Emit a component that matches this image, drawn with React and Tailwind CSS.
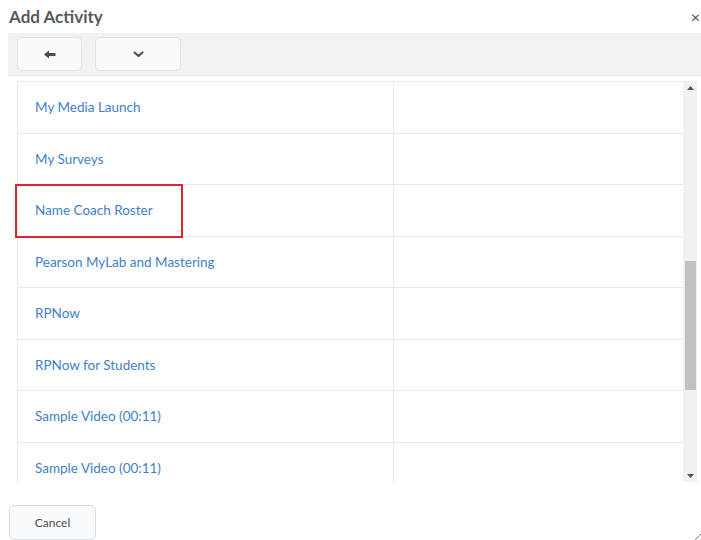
import React from 'react';

const tools = [
    'My Media Launch',
    'My Surveys',
    'Name Coach Roster',
    'Pearson MyLab and Mastering',
    'RPNow',
    'RPNow for Students',
    'Sample Video (00:11)',
    'Sample Video (00:11)',
];

function BackIcon() {
    return (
        <svg width="12" height="9" viewBox="0 0 12 9">
            <path d="M0 4.5 L5 0.5 V3 H11.5 V6 H5 V8.5 Z" fill="#494c4e" />
        </svg>
    );
}

function ChevronIcon() {
    return (
        <svg width="11" height="7" viewBox="0 0 11 7">
            <path d="M1.5 1.5 L5.5 5 L9.5 1.5" fill="none" stroke="#494c4e" strokeWidth="2" strokeLinecap="round" strokeLinejoin="round" />
        </svg>
    );
}

function App() {
    return (
        <div className="w-[701px] h-[540px] bg-white overflow-hidden relative font-['Lato','Open_Sans',sans-serif]">
            {/* title */}
            <div className="h-[33px] flex items-center justify-between pl-[9px]">
                <h1 className="text-[17px] font-bold text-[#565a5c] leading-none">Add Activity</h1>
                <span className="text-[16px] text-[#494c4e] mr-[1px] leading-none">×</span>
            </div>

            {/* toolbar */}
            <div className="ml-[8px] h-[43px] bg-[#f2f2f2] border-b border-[#e4e4e4] flex items-center gap-[13px] pl-[9px]">
                <button className="w-[65px] h-[34px] bg-[#f9fafb] border border-[#e0e3e8] rounded-[5px] flex items-center justify-center">
                    <BackIcon />
                </button>
                <button className="w-[86px] h-[34px] bg-[#f9fafb] border border-[#e0e3e8] rounded-[5px] flex items-center justify-center">
                    <ChevronIcon />
                </button>
            </div>

            {/* tool list */}
            <div className="relative mt-[5px] ml-[17px] h-[401px] flex">
                <div className="w-[666px] h-full overflow-hidden border-l border-t border-[#e6e9ee]">
                    {tools.map((name, i) => (
                        <div key={i} className="h-[51.5px] flex border-b border-[#e6e9ee]">
                            <div className="w-[376px] border-r border-[#e6e9ee] flex items-center pl-[17px]">
                                <a className="text-[13.5px] text-[#3f7fc6]">{name}</a>
                            </div>
                            <div className="flex-1" />
                        </div>
                    ))}
                </div>
                {/* highlight around Name Coach Roster */}
                <div className="absolute left-[-2px] top-[103px] w-[168px] h-[54px] border-2 border-[#e3222b]" />
                {/* scrollbar */}
                <div className="w-[14px] h-full bg-[#f1f1f1] flex flex-col items-center">
                    <div className="h-[13px] flex items-center justify-center">
                        <svg width="7" height="4" viewBox="0 0 7 4"><path d="M0 4 L3.5 0 L7 4 Z" fill="#555" /></svg>
                    </div>
                    <div className="mt-[167px] w-[11px] h-[129px] bg-[#c1c1c1]" />
                    <div className="flex-1" />
                    <div className="h-[13px] flex items-center justify-center">
                        <svg width="7" height="4" viewBox="0 0 7 4"><path d="M0 0 L3.5 4 L7 0 Z" fill="#555" /></svg>
                    </div>
                </div>
            </div>

            {/* footer */}
            <div className="mt-[23px] pl-[9px]">
                <button className="w-[87px] h-[35px] bg-[#f9fafb] border border-[#d8dce3] rounded-[5px] text-[12px] text-[#494c4e]">
                    Cancel
                </button>
            </div>

            {/* resize grip */}
            <svg className="absolute right-[0px] bottom-[0px]" width="6" height="6" viewBox="0 0 6 6">
                <path d="M6 0 L0 6" stroke="#888" strokeWidth="1" />
            </svg>
        </div>
    );
}

export default App;
